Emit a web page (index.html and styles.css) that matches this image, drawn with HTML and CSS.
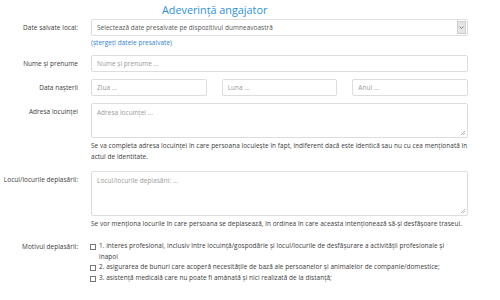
FILE: index.html
```html
<!DOCTYPE html>
<html lang="ro">
<head>
<meta charset="utf-8">
<link rel="stylesheet" href="styles.css">
</head>
<body>
<div class="page">
  <h1 class="title">Adeverință angajator</h1>
  <div class="row">
    <div class="label">Date salvate local:</div>
    <div class="field">
      <div class="select">
        <span class="select-text">Selectează date presalvate pe dispozitivul dumneavoastră</span>
        <span class="select-btn"><svg width="5" height="3" viewBox="0 0 5 3"><path d="M0.5 0.5 L2.5 2.5 L4.5 0.5" fill="none" stroke="#666" stroke-width="0.8"/></svg></span>
      </div>
      <a class="link" href="#">(ștergeți datele presalvate)</a>
    </div>
  </div>
  <div class="row row-nume">
    <div class="label">Nume și prenume</div>
    <div class="field"><div class="input placeholder">Nume și prenume ...</div></div>
  </div>
  <div class="row row-data">
    <div class="label">Data nașterii</div>
    <div class="field three">
      <div class="input placeholder">Ziua ...</div>
      <div class="input placeholder">Luna ...</div>
      <div class="input placeholder">Anul ...</div>
    </div>
  </div>
  <div class="row row-adresa">
    <div class="label">Adresa locuinței</div>
    <div class="field">
      <div class="textarea ta-short placeholder">Adresa locuinței ...<span class="grip"></span></div>
      <p class="help">Se va completa adresa locuinței în care persoana locuiește în fapt, indiferent dacă este identică sau nu cu cea menționată în actul de identitate.</p>
    </div>
  </div>
  <div class="row row-locul">
    <div class="label">Locul/locurile deplasării:</div>
    <div class="field">
      <div class="textarea ta-tall placeholder">Locul/locurile deplasării: ...<span class="grip"></span></div>
      <p class="help">Se vor menționa locurile în care persoana se deplasează, în ordinea în care aceasta intenționează să-și desfășoare traseul.</p>
    </div>
  </div>
  <div class="row row-motiv">
    <div class="label">Motivul deplasării:</div>
    <div class="field checks">
      <div class="check"><span class="box"></span><span class="ctext">1. interes profesional, inclusiv între locuință/gospodărie și locul/locurile de desfășurare a activității profesionale și înapoi</span></div>
      <div class="check"><span class="box"></span><span class="ctext">2. asigurarea de bunuri care acoperă necesitățile de bază ale persoanelor și animalelor de companie/domestice;</span></div>
      <div class="check"><span class="box"></span><span class="ctext">3. asistență medicală care nu poate fi amânată și nici realizată de la distanță;</span></div>
    </div>
  </div>
</div>
</body>
</html>
```
FILE: styles.css
```css
* { box-sizing: border-box; }
html, body { margin: 0; padding: 0; background: #fff; }
body {
  font-family: "Open Sans", "Noto Sans", "DejaVu Sans", sans-serif;
  font-size: 6.45px;
  letter-spacing: 0.05px;
  color: #3a3a3a;
  width: 500px;
  height: 300px;
  overflow: hidden;
}
.page { width: 468px; }
.title {
  margin: 0;
  padding: 2px 0 0 162px;
  height: 19px;
  font-size: 10.8px;
  font-weight: 400;
  letter-spacing: 0;
  color: #2b8fe0;
  line-height: 15px;
}
.row {
  display: grid;
  grid-template-columns: 78px 377px;
  column-gap: 13px;
}
.label {
  text-align: right;
  line-height: 17px;
  color: #3a3a3a;
  white-space: nowrap;
}
.field { min-width: 0; }
.select {
  height: 17px;
  border: 1px solid #ddd;
  border-radius: 2px;
  display: flex;
  align-items: center;
  padding: 1px 1px 1px 5px;
  color: #555;
}
.select-text { flex: 1; }
.select-btn {
  width: 9px;
  height: 13px;
  background: #e6e6e6;
  border: 1px solid #cfcfcf;
  display: flex;
  align-items: center;
  justify-content: center;
}
.link {
  display: block;
  color: #2f7fcf;
  text-decoration: none;
  line-height: 11px;
  margin-top: 1px;
  margin-bottom: 7px;
}
.input {
  height: 17px;
  border: 1px solid #ddd;
  border-radius: 2px;
  padding-left: 5px;
  line-height: 15px;
}
.placeholder { color: #999; }
.row-data, .row-adresa { margin-top: 7px; }
.three {
  display: grid;
  grid-template-columns: 1fr 1fr 1fr;
  column-gap: 15px;
}
.row-adresa .label, .row-locul .label { line-height: 18px; }
.textarea {
  position: relative;
  border: 1px solid #ddd;
  border-radius: 2px;
  padding: 4px 5px;
  line-height: 9px;
}
.ta-short { height: 35px; }
.ta-tall { height: 45px; }
.grip {
  position: absolute;
  right: 2px;
  bottom: 2px;
  width: 4px;
  height: 4px;
  background: linear-gradient(135deg, transparent 45%, #bbb 45%, #bbb 55%, transparent 55%, transparent 75%, #bbb 75%, #bbb 85%, transparent 85%);
}
.help {
  margin: 2px 0 0;
  line-height: 11px;
  color: #3a3a3a;
}
.row-locul { margin-top: 9px; }
.row-motiv { margin-top: 12px; }
.row-motiv .label { line-height: 11px; }
.check {
  display: flex;
  align-items: flex-start;
  line-height: 10.7px;
  padding-right: 10px;
}
.box {
  flex: none;
  width: 6px;
  height: 6px;
  border: 1px solid #777;
  margin: 3px 3px 0 -1px;
  background: #fff;
}
.ctext { flex: 1; }
```
